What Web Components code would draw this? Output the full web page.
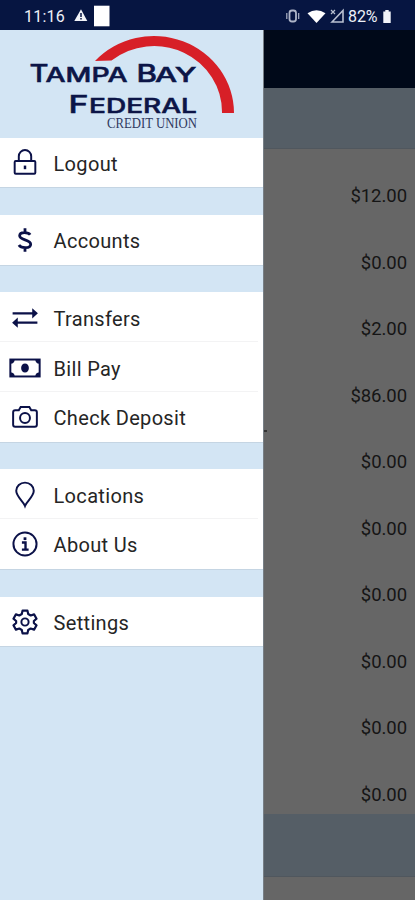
<!DOCTYPE html>
<html lang="en">
<head>
<meta charset="utf-8">
<title>Tampa Bay Federal Credit Union</title>
<style>
html, body { margin: 0; height: 100%; overflow: hidden; font-family: Roboto, "Liberation Sans", sans-serif; }
</style>
</head>
<body>
<app-screen></app-screen>
<script>
const define = (name, html) => customElements.define(name, class extends HTMLElement {
  constructor() {
    super();
    this.attachShadow({ mode: 'open' }).innerHTML = html;
  }
});

define('status-bar', `
<style>
:host { display: flex; align-items: center; justify-content: space-between; height: 30px; box-sizing: border-box; padding: 1px 22px 0 24px; background: #061541; color: #edf0f7; font-size: 16px; }
div { display: flex; align-items: center; height: 29px; }
svg { display: block; }
.time { width: 50px; letter-spacing: .2px; padding-top: 1px; }
.pct { margin-left: 3px; width: 34px; letter-spacing: -.1px; padding-top: 1px; }
</style>
<div><span class="time">11:16</span>
<svg width="36" height="22" viewBox="0 0 36 22"><path d="M7 4.200 13.300 16H.3Z" fill="#f1f3f8"/><path d="M7 8v4M7 13v1.500" stroke="#061541" stroke-width="1.500"/><path d="M20 .7h15.500v20.600H20z" fill="#fff"/></svg></div>
<div><svg width="60" height="18" viewBox="0 0 60 18"><g fill="none" stroke="#aeb5c8"><rect x="4.500" y="3.500" width="6.500" height="11" rx="2.500" stroke-width="1.800"/><path d="M1.800 6v6M13.700 6v6" stroke-width="1.200"/></g><path d="M22.500 6.300Q31.500 .3 40.500 6.300L31.500 16Z" fill="#fff"/><path d="M47 15 58 3.500V15Z" fill="none" stroke="#b9c0d0" stroke-width="1.600"/><path d="m46 3 4 4m0-4-4 4" stroke="#b9c0d0" stroke-width="1.200"/></svg>
<span class="pct">82%</span>
<svg width="11" height="16" viewBox="0 0 11 16"><path d="M3.300 2h3.400v1.500h2V15H1.300V3.500h2z" fill="#f2f4f9"/></svg></div>`);

define('brand-logo', `
<style>:host { display: block; height: 107.500px; } svg { display: block; }</style>
<svg width="263" height="107" viewBox="0 30 263 107">
<path d="M95 61A80 77 0 0 1 234 113H222A68 66 0 0 0 111.500 60.500Z" fill="#d71f27"/>
<g fill="#0c1547" stroke="#0c1547" stroke-width=".5" font-family="Inter, sans-serif" font-weight="500" font-size="23.800">
<text x="29.500" y="81.600" textLength="19" lengthAdjust="spacingAndGlyphs">T</text>
<text x="45.500" y="81.600" textLength="82" lengthAdjust="spacingAndGlyphs" font-size="19.800">AMPA</text>
<text x="136.500" y="81.600" textLength="20.500" lengthAdjust="spacingAndGlyphs">B</text>
<text x="155" y="81.600" textLength="41.500" lengthAdjust="spacingAndGlyphs" font-size="19.800">AY</text>
<text x="68.500" y="112.500" textLength="20" lengthAdjust="spacingAndGlyphs">F</text>
<text x="89" y="112.500" textLength="108" lengthAdjust="spacingAndGlyphs" font-size="19.800">EDERAL</text>
</g>
<text x="107" y="127.900" textLength="90" lengthAdjust="spacingAndGlyphs" fill="#30395f" font-family="Liberation Serif, serif" font-size="15.500">CREDIT UNION</text>
</svg>`);

define('menu-group', `
<style>:host { display: block; background: #fff; margin-bottom: 27.800px; box-shadow: 0 1px 0 #c5d5e3; }</style><slot></slot>`);

const icons = {
  lock: '<rect x="5" y="13" width="20" height="12.500" rx="1"/><path d="M9 13V8.500a6 6 0 0 1 12 0V13"/><path d="M15 17.500v3.500" stroke-width="2.400"/>',
  dollar: '<path stroke-width="2.700" d="M20 10C18.500 7.700 10 6.500 9.800 11c0 4.500 10.700 3.200 10.700 8 0 4.500-9.300 4.200-11.400.800M15 3.500v4M15 22.500v4"/>',
  transfer: '<path stroke-width="2.100" d="M3 10.500h20M27 19.500H7"/><path fill="#0b1148" stroke="none" d="M22 5.500 27.500 10.500 22 15.500zM8 14.500 2.500 19.500 8 24.500z"/>',
  bill: '<rect x=".800" y="6.800" width="28.400" height="16.400"/><path fill="#0b1148" stroke="none" d="M1 7h4q0 3.500-4 4zM29 7h-4q0 3.500 4 4zM1 23h4q0-3.500-4-4zM29 23h-4q0-3.500 4-4z"/><ellipse cx="15" cy="15" rx="2.800" ry="3.500" fill="#0b1148"/>',
  camera: '<path d="M5.500 8.500H9l1.800-3.200h8.400L21 8.500h3.500q2 0 2 2v12q0 2-2 2h-19q-2 0-2-2v-12q0-2 2-2z"/><circle cx="15" cy="16" r="4.800"/>',
  pin: '<path d="M15 25.500C13.500 21.500 6.500 16.500 6.500 11A8.500 8 0 0 1 23.500 11C23.500 16.500 16.500 21.500 15 25.500Z"/>',
  info: '<circle cx="15" cy="15" r="11.200"/><path stroke-width="2.700" d="M15 8.500V11.200"/><path d="M12 13.500h3.500V20M12 20.500h6.500" stroke-width="2.300"/>',
  gear: '<circle cx="15" cy="15" r="3.500"/><path stroke-linejoin="round" stroke-width="2.100" d="M12.600 4h4.800l.700 3.300 2.400 1.400 3.300-1.100 2.400 4.200-2.600 2.200v2l2.600 2.200-2.400 4.200-3.300-1.100-2.400 1.400-.700 3.300h-4.800l-.700-3.300-2.400-1.400-3.300 1.100-2.400-4.200L6.400 16v-2l-2.600-2.200 2.400-4.200 3.300 1.100 2.400-1.400z"/>'
};

customElements.define('menu-item', class extends HTMLElement {
  connectedCallback() {
    if (this.shadowRoot) return;
    this.attachShadow({ mode: 'open' }).innerHTML = `
<style>
:host { display: grid; grid-template-columns: 32px 1fr; column-gap: 12.500px; align-items: center; height: 49.700px; padding: 0 0 0 9px; box-sizing: border-box; color: #252525; font-size: 20px; letter-spacing: .330px; background: linear-gradient(#f3f3f4, #f3f3f4) 0 100% / 258px 1px no-repeat; }
:host(:last-child) { background: none; }
svg { display: block; fill: none; stroke: #0b1148; stroke-width: 1.900; margin-top: 1px; }
span { line-height: 24px; padding-top: 3px; }
</style>
<svg width="32" height="32" viewBox="-.5 -.5 31 31">${icons[this.getAttribute('icon')]}</svg><span><slot></slot></span>`;
  }
});

define('side-drawer', `
<style>:host { display: block; width: 263px; height: 870px; background: #d3e5f4; box-shadow: 1px 0 0 #777f86; }</style><slot></slot>`);

define('amount-row', `
<style>:host { display: flex; justify-content: flex-end; height: 66.500px; box-sizing: border-box; padding: 35px 8px 0 0; font-size: 18.500px; line-height: 24px; color: #151515; letter-spacing: -.050px; }</style><slot></slot>`);

define('account-list', `
<style>
:host { display: block; height: 870px; background: #666; overflow: hidden; }
.title { height: 58px; background: #000919; }
.band { height: 61px; background: #555e66; border-bottom: 1px solid #50575e; box-sizing: border-box; }
.foot { height: 63px; }
</style><div class="title"></div><div class="band"></div><slot></slot><div class="band foot"></div>`);

define('app-screen', `
<style>
:host { display: block; width: 415px; height: 900px; overflow: hidden; }
main { display: grid; grid-template-columns: 263px 152px; position: relative; }
side-drawer { z-index: 1; }
i { position: absolute; left: 264px; top: 400px; width: 3px; height: 2px; background: #333; }
</style>
<status-bar></status-bar>
<main>
<side-drawer>
<brand-logo></brand-logo>
<menu-group><menu-item icon="lock">Logout</menu-item></menu-group>
<menu-group><menu-item icon="dollar">Accounts</menu-item></menu-group>
<menu-group><menu-item icon="transfer">Transfers</menu-item><menu-item icon="bill">Bill Pay</menu-item><menu-item icon="camera">Check Deposit</menu-item></menu-group>
<menu-group><menu-item icon="pin">Locations</menu-item><menu-item icon="info">About Us</menu-item></menu-group>
<menu-group><menu-item icon="gear">Settings</menu-item></menu-group>
</side-drawer>
<account-list>
<amount-row>$12.00</amount-row><amount-row>$0.00</amount-row><amount-row>$2.00</amount-row><amount-row>$86.00</amount-row><amount-row>$0.00</amount-row><amount-row>$0.00</amount-row><amount-row>$0.00</amount-row><amount-row>$0.00</amount-row><amount-row>$0.00</amount-row><amount-row>$0.00</amount-row>
</account-list>
<i></i>
</main>`);
</script>
</body>
</html>
